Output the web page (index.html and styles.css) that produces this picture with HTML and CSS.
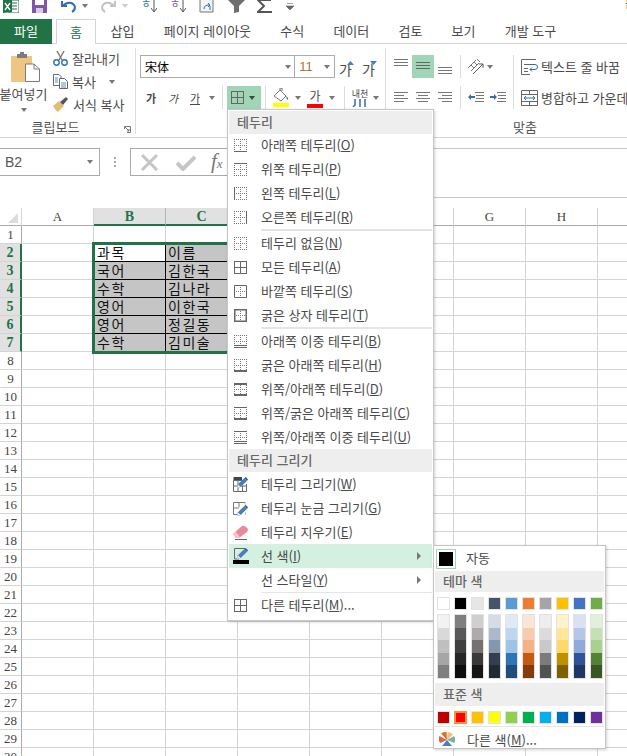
FILE: index.html
```html
<!DOCTYPE html>
<html lang="ko">

<head>
  <title>Excel 테두리 메뉴</title>
  <meta charset="utf-8">
  <meta name="viewport" content="width=device-width, initial-scale=1.0">
  <link rel="stylesheet" href="styles.css">
</head>

<body>
  <!-- shared border glyphs for the menu -->
  <svg class="defs" width="0" height="0">
    <symbol id="dots" viewBox="0 0 13 13">
      <path d="M0 .5H13M0 6.5H13M0 12.5H13M.5 0V13M6.5 0V13M12.5 0V13" fill="none" stroke="#777" stroke-dasharray="1 1" shape-rendering="crispEdges" />
    </symbol>
    <symbol id="cross" viewBox="0 0 13 13">
      <path d="M6.5 0V13M0 6.5H13" fill="none" stroke="#777" stroke-dasharray="1 1" shape-rendering="crispEdges" />
    </symbol>
    <symbol id="allb" viewBox="0 0 13 13">
      <path d="M.5 .5H12.5V12.5H.5ZM6.5 0V13M0 6.5H13" fill="none" stroke="#666" shape-rendering="crispEdges" />
    </symbol>
    <symbol id="pencil" viewBox="0 0 12 12">
      <path d="M0 12L1 8L8 1L11 4L4 11Z" fill="#4a7ebb" />
      <path d="M8 1L9.500 0L12 2.500L11 4Z" fill="#2b5f9e" />
      <path d="M0 12L1 8L4 11Z" fill="#dfe8f2" />
    </symbol>
  </svg>

  <div class="qat">
    <span class="qat-btn">
      <svg width="16" height="13" viewBox="0 0 16 13">
        <path d="M6 0H16V13H6Z" fill="#fff" stroke="#217346" />
        <path d="M9 3H14M9 6H14M9 9H14" stroke="#217346" />
        <path d="M0 0H9V12L0 13Z" fill="#217346" />
        <path d="M2 3L7 10M7 3L2 10" stroke="#fff" stroke-width="1.300" />
      </svg>
    </span>
    <span class="qat-btn">
      <svg width="15" height="13" viewBox="0 0 15 13">
        <path d="M0 0H15V13H0Z" fill="#7e57a6" />
        <path d="M3 0H12V5H3Z" fill="#fff" />
        <path d="M4 8H11V13H4Z" fill="#d8cbe6" />
      </svg>
    </span>
    <span class="qat-btn split">
      <svg width="15" height="13" viewBox="0 0 15 13">
        <path d="M1 1V6H6" fill="none" stroke="#2f6eb5" stroke-width="2" />
        <path d="M2 6C5 2 12 1 14 7C14 9 13 11 11 12" fill="none" stroke="#2f6eb5" stroke-width="2" />
      </svg>
      <i class="caret"></i>
    </span>
    <span class="qat-btn split">
      <svg width="15" height="13" viewBox="0 0 15 13">
        <path d="M14 1V6H9" fill="none" stroke="#c4c4c4" stroke-width="2" />
        <path d="M13 6C10 2 3 1 1 7C1 9 2 11 4 12" fill="none" stroke="#c4c4c4" stroke-width="2" />
      </svg>
      <i class="caret light"></i>
    </span>
    <span class="qat-btn">
      <span class="sort-txt blue">ㅎ</span>
      <svg width="6" height="13" viewBox="0 0 6 13">
        <path d="M3 0V11M0 8L3 12L6 8" fill="none" stroke="#555" />
      </svg>
    </span>
    <span class="qat-btn">
      <span class="sort-txt purple">ㅎ</span>
      <svg width="6" height="13" viewBox="0 0 6 13">
        <path d="M3 0V11M0 8L3 12L6 8" fill="none" stroke="#555" />
      </svg>
    </span>
    <span class="qat-btn">
      <svg width="17" height="13" viewBox="0 0 17 13">
        <path d="M1 0V12H14V0" fill="#f4f4f4" stroke="#777" />
        <path d="M5 9C5 6 7 5 10 5M9 3L11 5L9 7M11 6V10" fill="none" stroke="#2f6eb5" />
      </svg>
    </span>
    <span class="qat-btn">
      <svg width="17" height="13" viewBox="0 0 17 13">
        <path d="M0 0H17L11 6V12L6 13V6Z" fill="#6f6f6f" />
      </svg>
    </span>
    <span class="qat-btn">
      <svg width="15" height="13" viewBox="0 0 15 13">
        <path d="M14 0H1L7 6L1 12H15" fill="none" stroke="#555" stroke-width="2" />
      </svg>
    </span>
    <span class="qat-btn">
      <svg width="8" height="12" viewBox="0 0 8 12">
        <path d="M1 3.500H7M0 6L8 6L4 10Z" fill="#666" stroke="#666" stroke-width=".6" />
      </svg>
    </span>
    <span class="title-bit">틀</span>
  </div>

  <div class="tabs">
    <span class="tab file">파일</span>
    <span class="tab home">홈</span>
    <span class="tab">삽입</span>
    <span class="tab">페이지 레이아웃</span>
    <span class="tab">수식</span>
    <span class="tab">데이터</span>
    <span class="tab">검토</span>
    <span class="tab">보기</span>
    <span class="tab">개발 도구</span>
  </div>

  <div class="ribbon">
    <div class="group clip">
      <div class="clip-body">
        <div class="paste">
          <svg width="29" height="30" viewBox="0 0 29 30">
            <path d="M0 4H21V30H0Z" fill="#eec583" />
            <path d="M6 2H9V0H13V2H16V6H6Z" fill="#7b7b7b" />
            <path d="M14.500 12H23L28.500 17V29.500H14.500Z" fill="#fff" stroke="#7b7b7b" />
            <path d="M23 12V17H28.500" fill="none" stroke="#7b7b7b" />
          </svg>
          <span class="paste-label">붙여넣기</span>
          <i class="caret"></i>
        </div>
        <div class="clip-list">
          <div class="clip-item">
            <svg width="15" height="15" viewBox="0 0 15 15">
              <path d="M4 0L9 9M11 0L6 9" stroke="#777" stroke-width="1.400" fill="none" />
              <circle cx="3.500" cy="11.500" r="2.700" fill="none" stroke="#2f6eb5" stroke-width="1.400" />
              <circle cx="11.500" cy="11.500" r="2.700" fill="none" stroke="#2f6eb5" stroke-width="1.400" />
            </svg>
            <span>잘라내기</span>
          </div>
          <div class="clip-item">
            <svg width="15" height="15" viewBox="0 0 15 15">
              <path d="M.5 .5H6L8 2.500V11.500H.5Z" fill="#fff" stroke="#666" />
              <path d="M6.500 4.500H11.500L14.500 7.500V14.500H6.500Z" fill="#fff" stroke="#666" />
              <path d="M8 9H13M8 11H13M8 13H13M2 4H5M2 6H5M2 8H5" stroke="#5b8fc7" />
            </svg>
            <span>복사</span>
            <i class="caret copy-caret"></i>
          </div>
          <div class="clip-item">
            <svg width="16" height="15" viewBox="0 0 16 15">
              <path d="M0 9L6 4L11 9L5 15Q2 13 0 9Z" fill="#e3bc78" />
              <path d="M7 5L13 0L15 2L10 8Z" fill="#555" />
            </svg>
            <span>서식 복사</span>
          </div>
        </div>
      </div>
      <span class="group-label">클립보드</span>
      <svg class="launcher" width="7" height="7" viewBox="0 0 7 7">
        <path d="M.5 3V.5H6.500V6.500H3M1 1L5 5M3 5H5V3" fill="none" stroke="#777" />
      </svg>
    </div>

    <div class="group font">
      <div class="font-row">
        <div class="combo name"><span class="fontname">宋体</span><i class="caret"></i></div>
        <div class="combo size"><span class="fontsize">11</span><i class="caret"></i></div>
        <span class="size-btn grow">가<svg width="7" height="4" viewBox="0 0 7 4"><path d="M0 4L3.500 0L7 4Z" fill="#4a7ebb" /></svg></span>
        <span class="size-btn shrink">가<svg width="7" height="4" viewBox="0 0 7 4"><path d="M0 0L3.500 4L7 0Z" fill="#4a7ebb" /></svg></span>
      </div>
      <div class="font-row second">
        <span class="mini bold">가</span>
        <span class="mini ital">가</span>
        <span class="mini under">가</span>
        <span class="mini-arrow"><i class="caret"></i></span>
        <span class="vsep first"></span>
        <span class="border-btn">
          <svg width="13" height="13" viewBox="0 0 13 13"><use href="#allb" /></svg>
          <i class="caret dark"></i>
        </span>
        <span class="vsep"></span>
        <span class="fill-btn">
          <svg width="16" height="19" viewBox="0 0 16 19">
            <path d="M1 8L7 2L13 8L8 13Z" fill="#fff" stroke="#777" />
            <path d="M7 2V0H9V3" fill="none" stroke="#777" />
            <path d="M13 8Q16 10 15 12Q13 11 13 8Z" fill="#4a7ebb" />
            <path d="M0 15H16V19H0Z" fill="#ffff00" />
          </svg>
        </span>
        <span class="fill-arrow"><i class="caret"></i></span>
        <span class="color-btn">가<b class="redbar"></b></span>
        <span class="fill-arrow"><i class="caret"></i></span>
        <span class="vsep third"></span>
        <span class="phon">내천<svg width="16" height="8" viewBox="0 0 16 8"><path d="M3 0V6L1 8M8 0V8M13 0V8" fill="none" stroke="#2f6eb5" stroke-width="1.500" /></svg></span>
        <span class="phon-arrow"><i class="caret"></i></span>
      </div>
    </div>

    <div class="group align">
      <div class="align-body">
        <div class="align-grid">
          <div class="align-row">
            <span class="al"><svg width="14" height="23" viewBox="0 0 14 23"><path d="M0 4.500H14M0 7.500H14M0 10.500H14" stroke="#777" shape-rendering="crispEdges" /></svg></span>
            <span class="al on"><svg width="14" height="23" viewBox="0 0 14 23"><path d="M0 7.500H14M0 10.500H14M0 13.500H14" stroke="#666" shape-rendering="crispEdges" /></svg></span>
            <span class="al"><svg width="14" height="23" viewBox="0 0 14 23"><path d="M0 12.500H14M0 15.500H14M0 18.500H14" stroke="#777" shape-rendering="crispEdges" /></svg></span>
            <span class="vsep short"></span>
            <span class="orient">
              <svg width="16" height="16" viewBox="0 0 16 16">
                <path d="M0 9L8 1M3 12L11 4" stroke="#777" fill="none" />
                <path d="M3 6L6 9M6 3L9 6M9 0L12 3" stroke="#777" fill="none" />
                <path d="M5 15L15 5M11 5H15V9" stroke="#555" fill="none" />
              </svg>
              <i class="caret"></i>
            </span>
          </div>
          <div class="align-row second">
            <span class="al"><svg width="14" height="23" viewBox="0 0 14 23"><path d="M0 6.500H14M0 9.500H10M0 12.500H14M0 15.500H10" stroke="#777" shape-rendering="crispEdges" /></svg></span>
            <span class="al"><svg width="14" height="23" viewBox="0 0 14 23"><path d="M0 6.500H14M2 9.500H12M0 12.500H14M2 15.500H12" stroke="#777" shape-rendering="crispEdges" /></svg></span>
            <span class="al"><svg width="14" height="23" viewBox="0 0 14 23"><path d="M0 6.500H14M4 9.500H14M0 12.500H14M4 15.500H14" stroke="#777" shape-rendering="crispEdges" /></svg></span>
            <span class="vsep short"></span>
            <span class="indent first">
              <svg width="16" height="23" viewBox="0 0 16 23"><path d="M7 6.500H16M8 9.500H16M8 12.500H16M7 15.500H16" stroke="#777" shape-rendering="crispEdges" /><path d="M0 11L3 8V10H7V12H3V14Z" fill="#2f6eb5" /></svg>
            </span>
            <span class="indent">
              <svg width="16" height="23" viewBox="0 0 16 23"><path d="M7 6.500H16M8 9.500H16M8 12.500H16M7 15.500H16" stroke="#777" shape-rendering="crispEdges" /><path d="M7 11L4 8V10H0V12H4V14Z" fill="#2f6eb5" /></svg>
            </span>
          </div>
        </div>
        <span class="vsep tall"></span>
        <div class="wrap-col">
          <div class="wrap-item">
            <svg width="17" height="16" viewBox="0 0 17 16">
              <path d="M.5 .5H15M.5 .5V15.500H9M3 5.500H9M3 9.500H7M3 12.500H7" fill="none" stroke="#666" />
              <path d="M9 5.500H14Q16.500 5.500 16.500 8Q16.500 10.500 14 10.500H9M11 8.500L9 10.500L11 12.500" fill="none" stroke="#2f6eb5" />
            </svg>
            <span>텍스트 줄 바꿈</span>
          </div>
          <div class="wrap-item">
            <svg width="17" height="16" viewBox="0 0 17 16">
              <path d="M.5 .5H16.500V15.500H.5ZM.5 4.500H16.500M.5 11.500H16.500M8.500 .5V4.500M8.500 11.500V15.500" fill="none" stroke="#666" />
              <path d="M3 8H14M5 6L3 8L5 10M12 6L14 8L12 10" fill="none" stroke="#2f6eb5" />
            </svg>
            <span>병합하고 가운데</span>
          </div>
        </div>
      </div>
      <span class="group-label">맞춤</span>
    </div>
  </div>

  <div class="formula">
    <div class="name-box"><span>B2</span><i class="caret"></i></div>
    <div class="grip"><i></i><i></i><i></i></div>
    <div class="fx-btns">
      <svg width="19" height="17" viewBox="0 0 19 17"><path d="M2 1L17 16M17 1L2 16" stroke="#c6c6c6" stroke-width="3" /></svg>
      <svg width="20" height="17" viewBox="0 0 20 17"><path d="M1 9L7 15L19 3" fill="none" stroke="#c6c6c6" stroke-width="4" /></svg>
      <span class="fx">f<small>x</small></span>
    </div>
    <div class="fx-input"></div>
  </div>

  <div class="sheet">
    <div class="col-heads">
      <div class="corner"><i></i></div>
      <div class="col-head">A</div>
      <div class="col-head on">B</div>
      <div class="col-head on">C</div>
      <div class="col-head">D</div>
      <div class="col-head">E</div>
      <div class="col-head">F</div>
      <div class="col-head">G</div>
      <div class="col-head">H</div>
      <div class="col-head">I</div>
    </div>
    <div class="sheet-body">
      <div class="row-nums">
        <div>1</div>
        <div class="on">2</div>
        <div class="on">3</div>
        <div class="on">4</div>
        <div class="on">5</div>
        <div class="on">6</div>
        <div class="on">7</div>
        <div>8</div>
        <div>9</div>
        <div>10</div>
        <div>11</div>
        <div>12</div>
        <div>13</div>
        <div>14</div>
        <div>15</div>
        <div>16</div>
        <div>17</div>
        <div>18</div>
        <div>19</div>
        <div>20</div>
        <div>21</div>
        <div>22</div>
        <div>23</div>
        <div>24</div>
        <div>25</div>
        <div>26</div>
        <div>27</div>
        <div>28</div>
        <div>29</div>
        <div>30</div>
      </div>
      <div class="cells">
        <div class="data">
          <div class="cell active">과목</div>
          <div class="cell">이름</div>
          <div class="cell">국어</div>
          <div class="cell">김한국</div>
          <div class="cell">수학</div>
          <div class="cell">김나라</div>
          <div class="cell">영어</div>
          <div class="cell">이한국</div>
          <div class="cell">영어</div>
          <div class="cell">정길동</div>
          <div class="cell">수학</div>
          <div class="cell">김미술</div>
        </div>
      </div>
    </div>
  </div>

  <div class="menu">
    <div class="menu-head first">테두리</div>
    <div class="item"><svg class="ic" viewBox="0 0 13 13"><use href="#dots" /><path d="M0 12.500H13" stroke="#666" /></svg><span>아래쪽 테두리(<u>O</u>)</span></div>
    <div class="item"><svg class="ic" viewBox="0 0 13 13"><use href="#dots" /><path d="M0 .5H13" stroke="#666" /></svg><span>위쪽 테두리(<u>P</u>)</span></div>
    <div class="item"><svg class="ic" viewBox="0 0 13 13"><use href="#dots" /><path d="M.5 0V13" stroke="#666" /></svg><span>왼쪽 테두리(<u>L</u>)</span></div>
    <div class="item"><svg class="ic" viewBox="0 0 13 13"><use href="#dots" /><path d="M12.500 0V13" stroke="#666" /></svg><span>오른쪽 테두리(<u>R</u>)</span></div>
    <div class="sep"></div>
    <div class="item"><svg class="ic" viewBox="0 0 13 13"><use href="#dots" /></svg><span>테두리 없음(<u>N</u>)</span></div>
    <div class="item"><svg class="ic" viewBox="0 0 13 13"><use href="#allb" /></svg><span>모든 테두리(<u>A</u>)</span></div>
    <div class="item"><svg class="ic" viewBox="0 0 13 13"><use href="#cross" /><path d="M.5 .5H12.500V12.500H.5Z" fill="none" stroke="#666" /></svg><span>바깥쪽 테두리(<u>S</u>)</span></div>
    <div class="item"><svg class="ic" viewBox="0 0 13 13"><use href="#cross" /><path d="M0 0H13V13H0Z" fill="none" stroke="#666" stroke-width="3" /></svg><span>굵은 상자 테두리(<u>T</u>)</span></div>
    <div class="sep"></div>
    <div class="item"><svg class="ic" viewBox="0 0 13 13"><use href="#dots" /><path d="M0 10.500H13M0 12.500H13" stroke="#666" /></svg><span>아래쪽 이중 테두리(<u>B</u>)</span></div>
    <div class="item"><svg class="ic" viewBox="0 0 13 13"><use href="#dots" /><path d="M0 12H13" stroke="#666" stroke-width="2" /></svg><span>굵은 아래쪽 테두리(<u>H</u>)</span></div>
    <div class="item"><svg class="ic" viewBox="0 0 13 13"><use href="#dots" /><path d="M0 1H13M0 12H13" stroke="#666" stroke-width="2" /></svg><span>위쪽/아래쪽 테두리(<u>D</u>)</span></div>
    <div class="item"><svg class="ic" viewBox="0 0 13 13"><use href="#dots" /><path d="M0 .5H13" stroke="#666" /><path d="M0 12H13" stroke="#666" stroke-width="2" /></svg><span>위쪽/굵은 아래쪽 테두리(<u>C</u>)</span></div>
    <div class="item"><svg class="ic" viewBox="0 0 13 13"><use href="#dots" /><path d="M0 .5H13M0 10.500H13M0 12.500H13" stroke="#666" /></svg><span>위쪽/아래쪽 이중 테두리(<u>U</u>)</span></div>
    <div class="menu-head">테두리 그리기</div>
    <div class="item">
      <svg class="ic wide" width="15" height="15" viewBox="0 0 15 15">
        <path d="M.5 3.500H13M.5 3.500V14.500H13.500V7M.5 9H13M5 3.500V14.500M9.500 9V14.500" fill="none" stroke="#666" />
        <path d="M.5 1.500H9" stroke="#444" stroke-width="3" />
        <use href="#pencil" x="4" y="0" width="11" height="11" />
      </svg>
      <span>테두리 그리기(<u>W</u>)</span>
    </div>
    <div class="item">
      <svg class="ic wide" width="15" height="15" viewBox="0 0 15 15">
        <path d="M.5 1.500H12M.5 1.500V13.500H5M6 1.500V6M.5 7H6" fill="none" stroke="#777" />
        <path d="M12 1.500V4M12.500 13.500V11" fill="none" stroke="#777" stroke-dasharray="1 1" />
        <use href="#pencil" x="4" y="4" width="11" height="11" />
      </svg>
      <span>테두리 눈금 그리기(<u>G</u>)</span>
    </div>
    <div class="item">
      <svg class="ic wide" width="15" height="15" viewBox="0 0 15 15">
        <path d="M0 9L9 1Q11 0 13 2L15 4Q15 6 14 7L6 13H3Z" fill="#e88a9c" />
        <path d="M0 9L3 13H6L7 12L3 7Z" fill="#f4c3cd" />
        <path d="M2 14.500H14" stroke="#666" />
      </svg>
      <span>테두리 지우기(<u>E</u>)</span>
    </div>
    <div class="item hover">
      <svg class="ic pen" width="16" height="16" viewBox="0 0 16 16">
        <path d="M12 .5H1.500V11H6" fill="none" stroke="#666" />
        <use href="#pencil" x="4" y="0" width="11" height="11" />
        <path d="M0 12H16V16H0Z" fill="#000" />
      </svg>
      <span>선 색(<u>I</u>)</span><i class="tri"></i>
    </div>
    <div class="item"><span class="no-icon">선 스타일(<u>Y</u>)</span><i class="tri"></i></div>
    <div class="sep thin"></div>
    <div class="item"><svg class="ic" viewBox="0 0 13 13"><use href="#allb" /></svg><span>다른 테두리(<u>M</u>)...</span></div>
  </div>

  <div class="submenu">
    <div class="auto-row">
      <span class="auto-swatch"><i></i></span>
      <span class="auto-label">자동</span>
    </div>
    <div class="menu-head">테마 색</div>
    <div class="swatches" id="theme-row"></div>
    <div class="strips" id="theme-strips"></div>
    <div class="menu-head std">표준 색</div>
    <div class="swatches" id="std-row"></div>
    <div class="sep full"></div>
    <div class="auto-row more">
      <svg width="16" height="16" viewBox="0 0 16 16">
        <path d="M8 8L2 1.500A8 8 0 0 1 7.500 0Z" fill="#d8712c" />
        <path d="M8 8L8.500 0A8 8 0 0 1 14 2.500Z" fill="#e8c27e" />
        <path d="M8 8L15 4A8 8 0 0 1 15.500 11Z" fill="#7fae9c" />
        <path d="M8 8L13 14L3 14Z" fill="#4a7ebb" />
        <path d="M8 8L1 11A8 8 0 0 1 .5 4Z" fill="#d8654f" />
      </svg>
      <span>다른 색(<u>M</u>)...</span>
    </div>
  </div>

  <script src="script.js"></script>
</body>

</html>
```

FILE: styles.css
```css
html,
body {
  margin: 0;
  height: 756px;
  overflow: hidden;
}

body {
  position: relative;
  background-color: #fff;
  color: #4a4a4a;
  font-family: "Noto Sans CJK KR", "Noto Sans", sans-serif;
  font-size: 13px;
  line-height: 16px;
}

.defs {
  position: absolute;
}

i {
  display: block;
}

.caret {
  width: 0;
  height: 0;
  border-left: 3.5px solid transparent;
  border-right: 3.5px solid transparent;
  border-top: 4px solid #777;
}

.caret.light {
  border-top-color: #ccc;
}

.caret.dark {
  border-top-color: #444;
}

/* quick access */
.qat {
  display: flex;
  height: 19px;
  padding-left: 3px;
  overflow: hidden;
}

.qat-btn {
  display: flex;
  gap: 0;
  align-items: flex-start;
  width: 29px;
  flex: none;
}

.qat-btn.split {
  width: 40px;
  gap: 6px;
}

.qat-btn.split .caret {
  margin-top: 4px;
}

.sort-txt {
  width: 10px;
  margin-top: -3px;
  font-size: 11px;
  line-height: 13px;
}

.sort-txt.blue {
  color: #2f6eb5;
}

.sort-txt.purple {
  color: #7e57a6;
}

.title-bit {
  margin-left: auto;
  margin-right: -8px;
  margin-top: -5px;
  font-size: 11px;
}

/* tabs */
.tabs {
  display: flex;
  height: 25px;
  box-sizing: border-box;
  border-bottom: 1px solid #d4d4d4;
}

.tab {
  padding: 0 14.6px;
  line-height: 24px;
}

.tab.file {
  width: 52px;
  height: 25px;
  box-sizing: border-box;
  margin-right: 4px;
  padding: 0;
  background-color: #217346;
  color: #fff;
  text-align: center;
}

.tab.home {
  width: 40px;
  height: 25px;
  box-sizing: border-box;
  padding: 0;
  background-color: #fff;
  border: 1px solid #d4d4d4;
  border-bottom: none;
  color: #217346;
  text-align: center;
}

/* ribbon */
.ribbon {
  display: flex;
  height: 94px;
  box-sizing: border-box;
  padding: 4px 0 3px;
  border-bottom: 1px solid #d4d4d4;
}

.group {
  position: relative;
  display: flex;
  flex-direction: column;
  box-sizing: border-box;
}

.group-label {
  position: absolute;
  bottom: 0;
  left: 0;
  right: 0;
  text-align: center;
  line-height: 14px;
  color: #555;
}

.clip {
  width: 136px;
  flex: none;
  border-right: 1px solid #dcdcdc;
}

.clip .group-label {
  right: 24px;
}

.launcher {
  position: absolute;
  right: 4px;
  bottom: 1px;
}

.clip-body {
  display: flex;
}

.paste {
  display: flex;
  flex-direction: column;
  align-items: center;
  width: 47px;
  padding-top: 4px;
  margin-left: 0;
}

.paste svg {
  margin-left: 3px;
}

.paste-label {
  margin-top: 4px;
  white-space: nowrap;
}

.paste .caret {
  margin-top: 6px;
}

.clip-list {
  margin-left: 6px;
  margin-top: -1px;
}

.clip-item {
  display: flex;
  align-items: center;
  gap: 4px;
  height: 23px;
  white-space: nowrap;
}

.copy-caret {
  margin-left: 9px;
}

.font {
  width: 250px;
  flex: none;
  padding-left: 4px;
  border-right: 1px solid #dcdcdc;
}

.font-row {
  display: flex;
  align-items: center;
  margin-top: 7px;
  height: 23px;
}

.font-row.second {
  margin-top: 8px;
}

.combo {
  display: flex;
  align-items: center;
  justify-content: space-between;
  box-sizing: border-box;
  height: 23px;
  border: 1px solid #ababab;
  background-color: #fff;
  padding: 0 3px;
}

.combo.name {
  width: 157px;
}

.combo.size {
  width: 41px;
  margin-left: -1px;
  padding-left: 4px;
  padding-right: 4px;
}

.fontname {
  color: #000;
  font-family: "Noto Sans CJK SC", sans-serif;
  font-size: 12px;
  margin-left: 1px;
}

.fontsize {
  color: #a8763a;
  font-family: "Liberation Sans", sans-serif;
}

.size-btn {
  display: flex;
  align-items: flex-end;
  flex: none;
  width: 23px;
  height: 23px;
  margin-top: 2px;
  font-size: 14px;
  line-height: 20px;
}

.size-btn svg {
  margin-left: -5px;
  margin-bottom: 14px;
}

.size-btn.grow {
  padding-left: 4px;
}

.mini {
  width: 22px;
  text-align: center;
  font-size: 11px;
  flex: none;
}

.mini.bold {
  font-weight: 700;
}

.mini.ital {
  font-style: italic;
}

.mini.under {
  text-decoration: underline;
}

.mini-arrow {
  width: 12px;
  display: flex;
  justify-content: center;
}

.vsep {
  display: block;
  width: 1px;
  height: 23px;
  flex: none;
  background-color: #dcdcdc;
  margin-left: 4px;
}

.border-btn {
  display: flex;
  align-items: center;
  justify-content: space-between;
  box-sizing: border-box;
  width: 34px;
  height: 23px;
  margin-left: 4px;
  padding: 0 6px 0 4px;
  background-color: #a0d6b6;
}

.fill-btn {
  display: flex;
  margin-left: 7px;
  width: 16px;
}

.fill-arrow {
  display: flex;
  justify-content: center;
  width: 8px;
  margin-left: 5px;
}

.color-btn {
  display: block;
  position: relative;
  width: 16px;
  height: 20px;
  margin-left: 5px;
  font-size: 12px;
  line-height: 15px;
  text-align: center;
}

.redbar {
  position: absolute;
  left: 0;
  bottom: 0;
  width: 16px;
  height: 4px;
  background-color: #f00;
}

.vsep.third {
  margin-left: 8px;
}

.phon {
  display: flex;
  flex-direction: column;
  align-items: center;
  width: 18px;
  margin-left: 6px;
  font-size: 9px;
  line-height: 10px;
}

.phon svg {
  margin-top: 0;
}

.phon-arrow {
  display: flex;
  justify-content: center;
  width: 8px;
  margin-left: 3px;
}

.align {
  flex: 1;
  min-width: 0;
  padding-left: 4px;
  overflow: hidden;
}

.align-body {
  display: flex;
  margin-top: 7px;
}

.align-grid {
  width: 123px;
  flex: none;
}

.align-row {
  display: flex;
  height: 23px;
}

.align-row.second {
  margin-top: 8px;
}

.al {
  display: flex;
  justify-content: center;
  width: 22px;
  height: 23px;
}

.al.on {
  background-color: #a0d6b6;
}

.orient {
  display: flex;
  align-items: center;
  gap: 3px;
  margin-left: 7px;
}

.indent.first {
  margin-left: 7px;
}

.indent {
  display: block;
  margin-left: 6px;
  height: 23px;
}

.vsep.tall {
  height: 54px;
  margin: 0;
}

.wrap-col {
  margin-left: 7px;
  white-space: nowrap;
}

.wrap-item {
  display: flex;
  align-items: center;
  gap: 3px;
  height: 23px;
}

.wrap-item + .wrap-item {
  margin-top: 8px;
}

.align .group-label {
  left: 126px;
  right: auto;
  width: 26px;
  white-space: nowrap;
}

/* formula bar */
.formula {
  display: flex;
  align-items: flex-start;
  height: 50px;
  margin-top: 10px;
}

.name-box {
  display: flex;
  align-items: center;
  justify-content: space-between;
  box-sizing: border-box;
  width: 100px;
  height: 28px;
  padding: 0 6px 0 5px;
  border: 1px solid #ababab;
  border-left: none;
  font-family: "Liberation Sans", sans-serif;
  font-size: 14px;
  color: #555;
}

.grip {
  display: flex;
  flex-direction: column;
  gap: 2px;
  width: 2px;
  margin: 9px 14px 0 14px;
}

.grip i {
  width: 2px;
  height: 2px;
  background-color: #aaa;
}

.fx-btns {
  display: flex;
  align-items: center;
  gap: 17px;
  box-sizing: border-box;
  width: 120px;
  height: 28px;
  padding-left: 9px;
  border: 1px solid #ababab;
  border-right: none;
  flex: none;
}

.fx {
  font-family: "Liberation Serif", serif;
  font-style: italic;
  font-size: 21px;
  color: #777;
  margin-left: -2px;
  white-space: nowrap;
}

.fx small {
  font-size: 13px;
}

.fx-input {
  flex: 1;
  height: 50px;
  box-sizing: border-box;
  border-top: 1px solid #c8c8c8;
  border-bottom: 1px solid #c8c8c8;
}

/* sheet */
.sheet {
  margin-top: 10px;
  font-family: "Liberation Serif", serif;
}

.col-heads {
  display: flex;
  height: 18px;
}

.corner {
  position: relative;
  width: 22px;
  flex: none;
  box-sizing: border-box;
  border-right: 1px solid #d4d4d4;
  border-bottom: 1px solid #ababab;
}

.corner i {
  position: absolute;
  left: 8px;
  top: 5px;
  width: 0;
  height: 0;
  border-left: 10px solid transparent;
  border-bottom: 10px solid #dcdcdc;
}

.col-head {
  width: 72px;
  flex: none;
  box-sizing: border-box;
  border-right: 1px solid #d4d4d4;
  border-bottom: 1px solid #ababab;
  text-align: center;
  line-height: 18px;
  font-size: 13px;
  color: #444;
}

.col-head.on {
  background-color: #e1e1e1;
  border-bottom: 2px solid #217346;
  border-right-color: #b5b5b5;
  color: #217346;
  font-weight: 700;
  font-size: 14px;
}

.sheet-body {
  display: flex;
}

.row-nums {
  width: 22px;
  flex: none;
}

.row-nums div {
  height: 18px;
  box-sizing: border-box;
  border-right: 1px solid #ababab;
  border-bottom: 1px solid #d4d4d4;
  text-align: center;
  line-height: 18px;
  font-size: 13px;
  color: #444;
}

.row-nums div.on {
  background-color: #e1e1e1;
  border-right: 2px solid #217346;
  color: #217346;
  font-weight: 700;
  font-size: 14px;
}

.cells {
  flex: 1;
  height: 540px;
  background-image: linear-gradient(to left, #d4d4d4 1px, transparent 1px), linear-gradient(to top, #d4d4d4 1px, transparent 1px);
  background-size: 72px 18px;
}

.data {
  display: grid;
  grid-template-columns: 72px 72px;
  grid-auto-rows: 18px;
  width: 144px;
  margin-left: 72px;
  padding-top: 0;
  transform: translateY(18px);
  outline: 3px solid #217346;
  outline-offset: -1px;
  font-family: "Noto Sans CJK KR", sans-serif;
  font-size: 14px;
  letter-spacing: 1.5px;
}

.cell {
  box-sizing: border-box;
  padding-left: 2px;
  background-color: #c5c5c5;
  border-bottom: 1px solid #000;
  color: #111;
  line-height: 17px;
}

.cell:nth-child(odd) {
  border-right: 1px solid #000;
  padding-left: 3px;
}

.cell:nth-last-child(-n + 2) {
  border-bottom: none;
}

.cell.active {
  background-color: #fff;
}

/* border dropdown */
.menu,
.submenu {
  position: absolute;
  box-sizing: border-box;
  background-color: #fff;
  border: 1px solid #c6c6c6;
  box-shadow: 1px 1px 3px rgba(0, 0, 0, 0.18);
  padding: 1px;
}

.menu {
  left: 227px;
  top: 109px;
  width: 207px;
  height: 512px;
}

.menu-head {
  height: 23px;
  padding-left: 8px;
  background-color: #eeeeee;
  color: #666;
  font-weight: 500;
  font-size: 13px;
  line-height: 22px;
}

.menu-head.first {
  margin-bottom: -1px;
}

.item {
  display: flex;
  align-items: center;
  position: relative;
  height: 24px;
  white-space: nowrap;
}

.item .ic {
  display: block;
  width: 13px;
  height: 13px;
  margin: 0 14px 0 5px;
  flex: none;
}

.item .ic.wide {
  width: 15px;
  height: 15px;
  margin: 0 13px 0 4px;
}

.item .ic.pen {
  width: 16px;
  height: 16px;
  margin: 0 12px 0 4px;
}

.no-icon {
  margin-left: 32px;
}

.item.hover {
  background-color: #d3f0e0;
}

.tri {
  position: absolute;
  right: 11px;
  top: 8px;
  width: 0;
  height: 0;
  border-top: 4px solid transparent;
  border-bottom: 4px solid transparent;
  border-left: 4px solid #777;
}

.sep {
  height: 2px;
  margin-left: 32px;
  background-color: #e4e4e4;
}

.sep.thin {
  height: 1px;
}

.submenu {
  left: 433px;
  top: 545px;
  width: 173px;
  height: 204px;
}

.submenu .menu-head {
  height: 21px;
  line-height: 20px;
}

.submenu .menu-head.std {
  height: 23px;
  margin-top: 4px;
  line-height: 22px;
}

.auto-row {
  display: flex;
  align-items: center;
  height: 24px;
}

.auto-label {
  margin-top: -3px;
  margin-left: -1px;
}

.auto-swatch {
  display: block;
  box-sizing: border-box;
  width: 20px;
  height: 20px;
  margin: -1px 11px 0 1px;
  padding: 2px;
  border: 1px solid #9fd5b7;
}

.auto-swatch i {
  width: 14px;
  height: 14px;
  background-color: #000;
}

.swatches {
  display: flex;
  gap: 4px;
  padding: 5px 0 2px 2px;
}

.swatch {
  box-sizing: border-box;
  width: 13px;
  height: 13px;
  border: 1px solid #e2e2e2;
}

.swatch.picked {
  border: 2px solid #f29436;
}

.strips {
  display: flex;
  gap: 4px;
  padding: 2px 0 0 2px;
}

.strip {
  display: flex;
  flex-direction: column;
  box-sizing: border-box;
  width: 13px;
  height: 65px;
  border: 1px solid #e2e2e2;
}

.strip i {
  flex: 1;
}

.sep.full {
  margin: 0;
  height: 1px;
}

.auto-row.more {
  height: 26px;
}

.auto-row.more svg {
  margin: 0 12px 0 4px;
  flex: none;
}
```

FILE: script.js
```js
// theme colours, top swatch then the five shades under it
var themeColors = [
  ["#ffffff", "#f2f2f2", "#d9d9d9", "#bfbfbf", "#a6a6a6", "#808080"],
  ["#000000", "#7f7f7f", "#595959", "#404040", "#262626", "#0d0d0d"],
  ["#e7e6e6", "#d0cece", "#aeaaaa", "#757171", "#3a3838", "#171616"],
  ["#44546a", "#d6dce5", "#adb9ca", "#8497b0", "#333f50", "#222a35"],
  ["#5b9bd5", "#deebf7", "#bdd7ee", "#9dc3e6", "#2e75b6", "#1f4e79"],
  ["#ed7d31", "#fbe5d6", "#f8cbad", "#f4b183", "#c55a11", "#843c0c"],
  ["#a5a5a5", "#ededed", "#dbdbdb", "#c9c9c9", "#7b7b7b", "#525252"],
  ["#ffc000", "#fff2cc", "#ffe699", "#ffd966", "#bf9000", "#7f6000"],
  ["#4472c4", "#d9e2f3", "#b4c7e7", "#8faadc", "#2f5597", "#203864"],
  ["#70ad47", "#e2f0d9", "#c5e0b4", "#a9d18e", "#548235", "#385723"]
];
var standardColors = ["#c00000", "#ff0000", "#ffc000", "#ffff00", "#92d050", "#00b050", "#00b0f0", "#0070c0", "#002060", "#7030a0"];

function addSwatch(parent, color, picked) {
  var el = document.createElement("div");
  el.className = picked ? "swatch picked" : "swatch";
  el.style.backgroundColor = color;
  parent.appendChild(el);
}

var themeRow = document.getElementById("theme-row");
var themeStrips = document.getElementById("theme-strips");
var stdRow = document.getElementById("std-row");

themeColors.forEach(function (col) {
  addSwatch(themeRow, col[0], false);
  var strip = document.createElement("div");
  strip.className = "strip";
  col.slice(1).forEach(function (shade) {
    var part = document.createElement("i");
    part.style.backgroundColor = shade;
    strip.appendChild(part);
  });
  themeStrips.appendChild(strip);
});

standardColors.forEach(function (color, index) {
  addSwatch(stdRow, color, index === 1);
});
```
